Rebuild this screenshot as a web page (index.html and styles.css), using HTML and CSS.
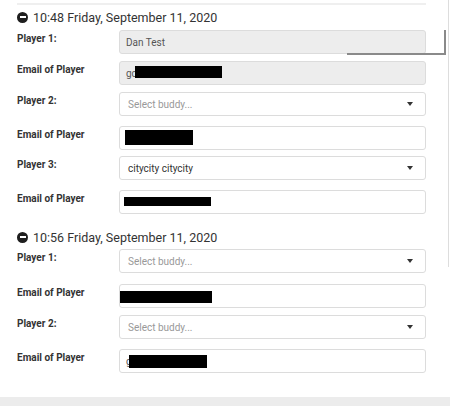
FILE: index.html
```html
<!DOCTYPE html>
<html>
<head>
<meta charset="utf-8">
<link rel="stylesheet" href="styles.css">
</head>
<body>
<div class="page">
  <div class="panel">
    <div class="topline"></div>

    <section class="slot">
      <h3 class="slot-title"><span class="minus-icon"></span>10:48 Friday, September 11, 2020</h3>
      <div class="row row-input">
        <label class="lbl">Player 1:</label>
        <div class="field disabled"><span class="val">Dan Test</span></div>
      </div>
      <div class="row row-input">
        <label class="lbl">Email of Player</label>
        <div class="field disabled"><span class="val">gc</span><span class="redact r1"></span></div>
      </div>
      <div class="row row-select">
        <label class="lbl">Player 2:</label>
        <div class="field select"><span class="ph">Select buddy...</span><span class="caret"></span></div>
      </div>
      <div class="row row-input tight">
        <label class="lbl">Email of Player</label>
        <div class="field"><span class="redact r2"></span></div>
      </div>
      <div class="row row-select">
        <label class="lbl">Player 3:</label>
        <div class="field select"><span class="txt">citycity citycity</span><span class="caret"></span></div>
      </div>
      <div class="row row-input last">
        <label class="lbl">Email of Player</label>
        <div class="field"><span class="redact r3"></span></div>
      </div>
    </section>

    <section class="slot second">
      <h3 class="slot-title"><span class="minus-icon"></span>10:56 Friday, September 11, 2020</h3>
      <div class="row row-select wide">
        <label class="lbl">Player 1:</label>
        <div class="field select"><span class="ph">Select buddy...</span><span class="caret"></span></div>
      </div>
      <div class="row row-input">
        <label class="lbl">Email of Player</label>
        <div class="field flush"><span class="redact r4"></span></div>
      </div>
      <div class="row row-select">
        <label class="lbl">Player 2:</label>
        <div class="field select"><span class="ph">Select buddy...</span><span class="caret"></span></div>
      </div>
      <div class="row row-input last">
        <label class="lbl">Email of Player</label>
        <div class="field"><span class="val">g</span><span class="redact r5"></span></div>
      </div>
    </section>

    <div class="edge-line"></div>
    <div class="resize-mark"></div>
  </div>
  <div class="footer-band"></div>
</div>
</body>
</html>
```

FILE: styles.css
```css
html, body {
  margin: 0;
  padding: 0;
  background: #ffffff;
}

body {
  font-family: Roboto, "Liberation Sans", Arial, sans-serif;
  color: #333333;
  width: 450px;
  height: 406px;
  overflow: hidden;
}

.page {
  display: flex;
  flex-direction: column;
  height: 406px;
}

.panel {
  position: relative;
  padding: 3px 0 24px 17px;
  width: 409px;
}

.topline {
  height: 2px;
  background: #efefef;
}

.slot-title {
  display: flex;
  align-items: center;
  margin: 3px 0 4px;
  height: 18px;
  font-size: 12.5px;
  font-weight: normal;
  color: #333333;
}

.second .slot-title {
  margin-top: 14px;
  margin-bottom: 3px;
}

.minus-icon {
  position: relative;
  width: 11px;
  height: 11px;
  border-radius: 50%;
  background: #1e1e1e;
  margin-right: 5px;
  flex: none;
}

.minus-icon::after {
  content: "";
  position: absolute;
  left: 2.5px;
  top: 4.5px;
  width: 6px;
  height: 2px;
  background: #ffffff;
}

.row {
  display: flex;
  align-items: flex-start;
}

.row-input { margin-bottom: 7px; }
.row-input.tight { margin-bottom: 6px; }
.row-select { margin-bottom: 10px; }
.row-select.wide { margin-bottom: 11px; }
.row.last { margin-bottom: 0; }

.lbl {
  width: 102px;
  flex: none;
  font-size: 10px;
  font-weight: bold;
  line-height: 14px;
  padding-top: 2px;
  color: #333333;
}

.field {
  box-sizing: border-box;
  width: 307px;
  height: 24px;
  border: 1px solid #dcdcdc;
  border-radius: 3px;
  background: #ffffff;
  display: flex;
  align-items: center;
  padding: 0 6px;
  font-size: 10px;
  position: relative;
}

.field.disabled {
  background: #ededed;
}

.field.select {
  padding: 0 8px;
}

.field.flush {
  padding: 0;
}

.val { color: #555555; }
.ph { color: #999999; }
.txt { color: #333333; }

.caret {
  margin-left: auto;
  margin-right: 4px;
  width: 0;
  height: 0;
  border-left: 3.5px solid transparent;
  border-right: 3.5px solid transparent;
  border-top: 4px solid #333333;
}

.redact {
  display: block;
  background: #000000;
  align-self: flex-start;
}

.r1 { width: 87px; height: 12px; margin-top: 4px; margin-left: -2px; }
.r2 { width: 68px; height: 15px; margin-top: 3px; margin-left: -1px; }
.r3 { width: 87px; height: 9px; margin-top: 6px; margin-left: -2px; }
.r4 { width: 92px; height: 12px; margin-top: 6px; }
.r5 { width: 78px; height: 13px; margin-top: 5px; margin-left: -3px; }

.edge-line {
  position: absolute;
  left: 448px;
  top: 0;
  width: 1px;
  height: 267px;
  background: #dddddd;
}

.resize-mark {
  position: absolute;
  left: 347px;
  top: 30px;
  width: 97px;
  height: 23px;
  border-right: 2px solid #8a8a8a;
  border-bottom: 2px solid #8a8a8a;
  border-top: 0;
  border-left: 0;
}

.footer-band {
  margin-top: auto;
  height: 10px;
  background: #ececec;
}
```
